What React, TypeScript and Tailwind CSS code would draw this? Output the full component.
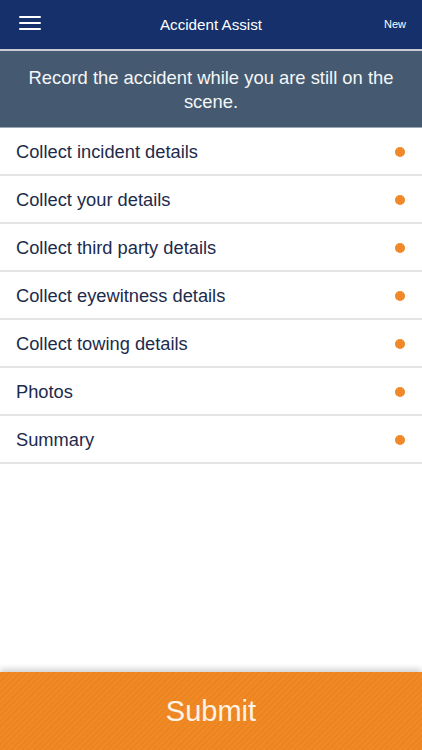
import React from "react";

const items = [
  "Collect incident details",
  "Collect your details",
  "Collect third party details",
  "Collect eyewitness details",
  "Collect towing details",
  "Photos",
  "Summary",
];

export default function App() {
  return (
    <div
      className="w-[422px] h-[750px] flex flex-col bg-white overflow-hidden"
      style={{ fontFamily: '"Liberation Sans", Arial, sans-serif' }}
    >
      <div className="h-[49px] bg-[#15306a] flex items-center relative shrink-0">
        <div className="absolute left-[19px] top-[16px] flex flex-col gap-[4px]">
          <div className="w-[22px] h-[2px] bg-white rounded-full" />
          <div className="w-[22px] h-[2px] bg-white rounded-full" />
          <div className="w-[22px] h-[2px] bg-white rounded-full" />
        </div>
        <div className="flex-1 text-center text-white text-[15.2px] leading-[18px]">Accident Assist</div>
        <div className="absolute right-[16px] top-[18px] text-white text-[11px] leading-[13px]">New</div>
      </div>
      <div className="h-[2px] bg-[#c9cdd3] shrink-0" />
      <div className="h-[76px] bg-[#455a70] flex items-center justify-center px-4 shrink-0">
        <p className="text-center text-[#f4f6f8] text-[18.4px] leading-[24px] pt-[1px]">
          Record the accident while you are still on the scene.
        </p>
      </div>
      <div className="h-[1px] bg-[#9aa8b8] shrink-0" />
      <div className="flex flex-col shrink-0">
        {items.map((t) => (
          <div
            key={t}
            className="h-[48px] flex items-center justify-between pl-[16px] pr-[17px] border-b-2 border-[#e4e4e4]"
          >
            <span className="text-[#1d2b4c] text-[18.3px] leading-[22px] pt-[2px]">{t}</span>
            <span className="w-[10px] h-[10px] rounded-full bg-[#f0892a] mt-[1px]" />
          </div>
        ))}
      </div>
      <div className="flex-1" />
      <div className="h-[78px] shrink-0 flex items-center justify-center shadow-[0_-3px_6px_rgba(0,0,0,0.18)] bg-[repeating-linear-gradient(135deg,#f08a24_0px,#f08a24_2px,#ec8521_2px,#ec8521_4px)]">
        <span className="text-[#fdf3e6] text-[29px] leading-[34px]">Submit</span>
      </div>
    </div>
  );
}
